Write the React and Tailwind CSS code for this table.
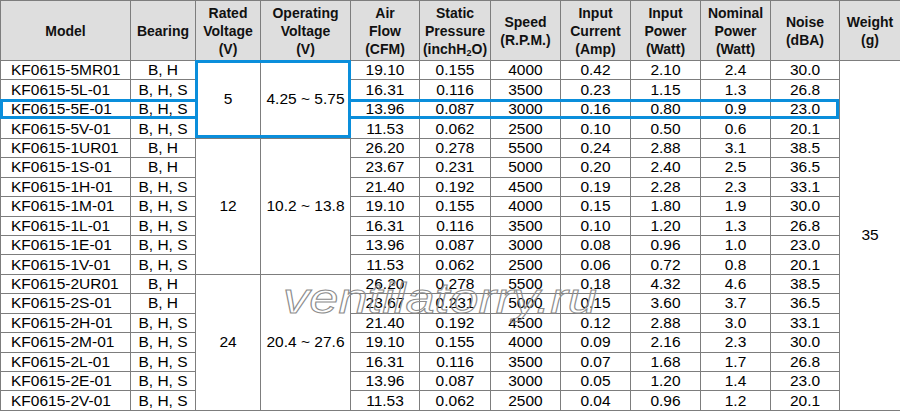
import React from "react";

const rows = [
  ["KF0615-5MR01", "B, H", "19.10", "0.155", "4000", "0.42", "2.10", "2.4", "30.0"],
  ["KF0615-5L-01", "B, H, S", "16.31", "0.116", "3500", "0.23", "1.15", "1.3", "26.8"],
  ["KF0615-5E-01", "B, H, S", "13.96", "0.087", "3000", "0.16", "0.80", "0.9", "23.0"],
  ["KF0615-5V-01", "B, H, S", "11.53", "0.062", "2500", "0.10", "0.50", "0.6", "20.1"],
  ["KF0615-1UR01", "B, H", "26.20", "0.278", "5500", "0.24", "2.88", "3.1", "38.5"],
  ["KF0615-1S-01", "B, H", "23.67", "0.231", "5000", "0.20", "2.40", "2.5", "36.5"],
  ["KF0615-1H-01", "B, H, S", "21.40", "0.192", "4500", "0.19", "2.28", "2.3", "33.1"],
  ["KF0615-1M-01", "B, H, S", "19.10", "0.155", "4000", "0.15", "1.80", "1.9", "30.0"],
  ["KF0615-1L-01", "B, H, S", "16.31", "0.116", "3500", "0.10", "1.20", "1.3", "26.8"],
  ["KF0615-1E-01", "B, H, S", "13.96", "0.087", "3000", "0.08", "0.96", "1.0", "23.0"],
  ["KF0615-1V-01", "B, H, S", "11.53", "0.062", "2500", "0.06", "0.72", "0.8", "20.1"],
  ["KF0615-2UR01", "B, H", "26.20", "0.278", "5500", "0.18", "4.32", "4.6", "38.5"],
  ["KF0615-2S-01", "B, H", "23.67", "0.231", "5000", "0.15", "3.60", "3.7", "36.5"],
  ["KF0615-2H-01", "B, H, S", "21.40", "0.192", "4500", "0.12", "2.88", "3.0", "33.1"],
  ["KF0615-2M-01", "B, H, S", "19.10", "0.155", "4000", "0.09", "2.16", "2.3", "30.0"],
  ["KF0615-2L-01", "B, H, S", "16.31", "0.116", "3500", "0.07", "1.68", "1.7", "26.8"],
  ["KF0615-2E-01", "B, H, S", "13.96", "0.087", "3000", "0.05", "1.20", "1.4", "23.0"],
  ["KF0615-2V-01", "B, H, S", "11.53", "0.062", "2500", "0.04", "0.96", "1.2", "20.1"],
];

const groups = {
  0: ["5", "4.25 ~ 5.75", 4],
  4: ["12", "10.2 ~ 13.8", 7],
  11: ["24", "20.4 ~ 27.6", 7],
};

const th = "border border-[#7d7d7d] bg-[#dedede] font-bold text-[14px] leading-[18px] text-[#111] text-center align-middle p-0";
const td = "border border-[#7d7d7d] text-[15.5px] leading-[18px] text-black text-center align-middle p-0 whitespace-nowrap";

export default function App() {
  return (
    <div className="relative w-[900px] h-[412px] bg-white overflow-hidden font-['Liberation_Sans',Arial,sans-serif]">
      <table className="table-fixed border-collapse w-[900px]">
        <colgroup>
          <col className="w-[130px]" />
          <col className="w-[65px]" />
          <col className="w-[65px]" />
          <col className="w-[90px]" />
          <col className="w-[69px]" />
          <col className="w-[71px]" />
          <col className="w-[70px]" />
          <col className="w-[70px]" />
          <col className="w-[70px]" />
          <col className="w-[70px]" />
          <col className="w-[69px]" />
          <col className="w-[61px]" />
        </colgroup>
        <thead>
          <tr className="h-[60px]">
            <th className={th}>Model</th>
            <th className={th}>Bearing</th>
            <th className={th}>Rated<br />Voltage<br />(V)</th>
            <th className={th}>Operating<br />Voltage<br />(V)</th>
            <th className={th}>Air<br />Flow<br />(CFM)</th>
            <th className={th}>Static<br />Pressure<br />(inchH<sub className="text-[9px] align-baseline relative top-[2px]">2</sub>O)</th>
            <th className={th}>Speed<br />(R.P.M.)</th>
            <th className={th}>Input<br />Current<br />(Amp)</th>
            <th className={th}>Input<br />Power<br />(Watt)</th>
            <th className={th}>Nominal<br />Power<br />(Watt)</th>
            <th className={th}>Noise<br />(dBA)</th>
            <th className={th}>Weight<br />(g)</th>
          </tr>
        </thead>
        <tbody>
          {rows.map((r, i) => (
            <tr key={i} className="h-[19.44px]">
              <td className={td + " !text-left pl-[10px]"}>{r[0]}</td>
              <td className={td}>{r[1]}</td>
              {groups[i] && (
                <>
                  <td className={td} rowSpan={groups[i][2]}>{groups[i][0]}</td>
                  <td className={td} rowSpan={groups[i][2]}>{groups[i][1]}</td>
                </>
              )}
              {r.slice(2).map((v, j) => (
                <td key={j} className={td}>{v}</td>
              ))}
              {i === 0 && (
                <td className={td} rowSpan={18}>35</td>
              )}
            </tr>
          ))}
        </tbody>
      </table>

      {/* highlight boxes */}
      <div className="absolute left-[195px] top-[60px] w-[156px] h-[78px] border-[3px] border-[#0a8edb] pointer-events-none" />
      <div className="absolute left-0 top-[99px] w-[198px] h-[20px] border-[3px] border-r-0 border-[#0a8edb] pointer-events-none" />
      <div className="absolute left-[348px] top-[99px] w-[491px] h-[20px] border-[3px] border-l-0 border-[#0a8edb] pointer-events-none" />

      {/* watermark */}
      <div className="absolute left-[283px] top-[277px] text-[43px] leading-none italic text-transparent [-webkit-text-stroke:1px_#8c8c8c] scale-x-[1.22] origin-left whitespace-nowrap pointer-events-none font-['Liberation_Sans',Arial,sans-serif]">
        ventilatorry.ru
      </div>
    </div>
  );
}
